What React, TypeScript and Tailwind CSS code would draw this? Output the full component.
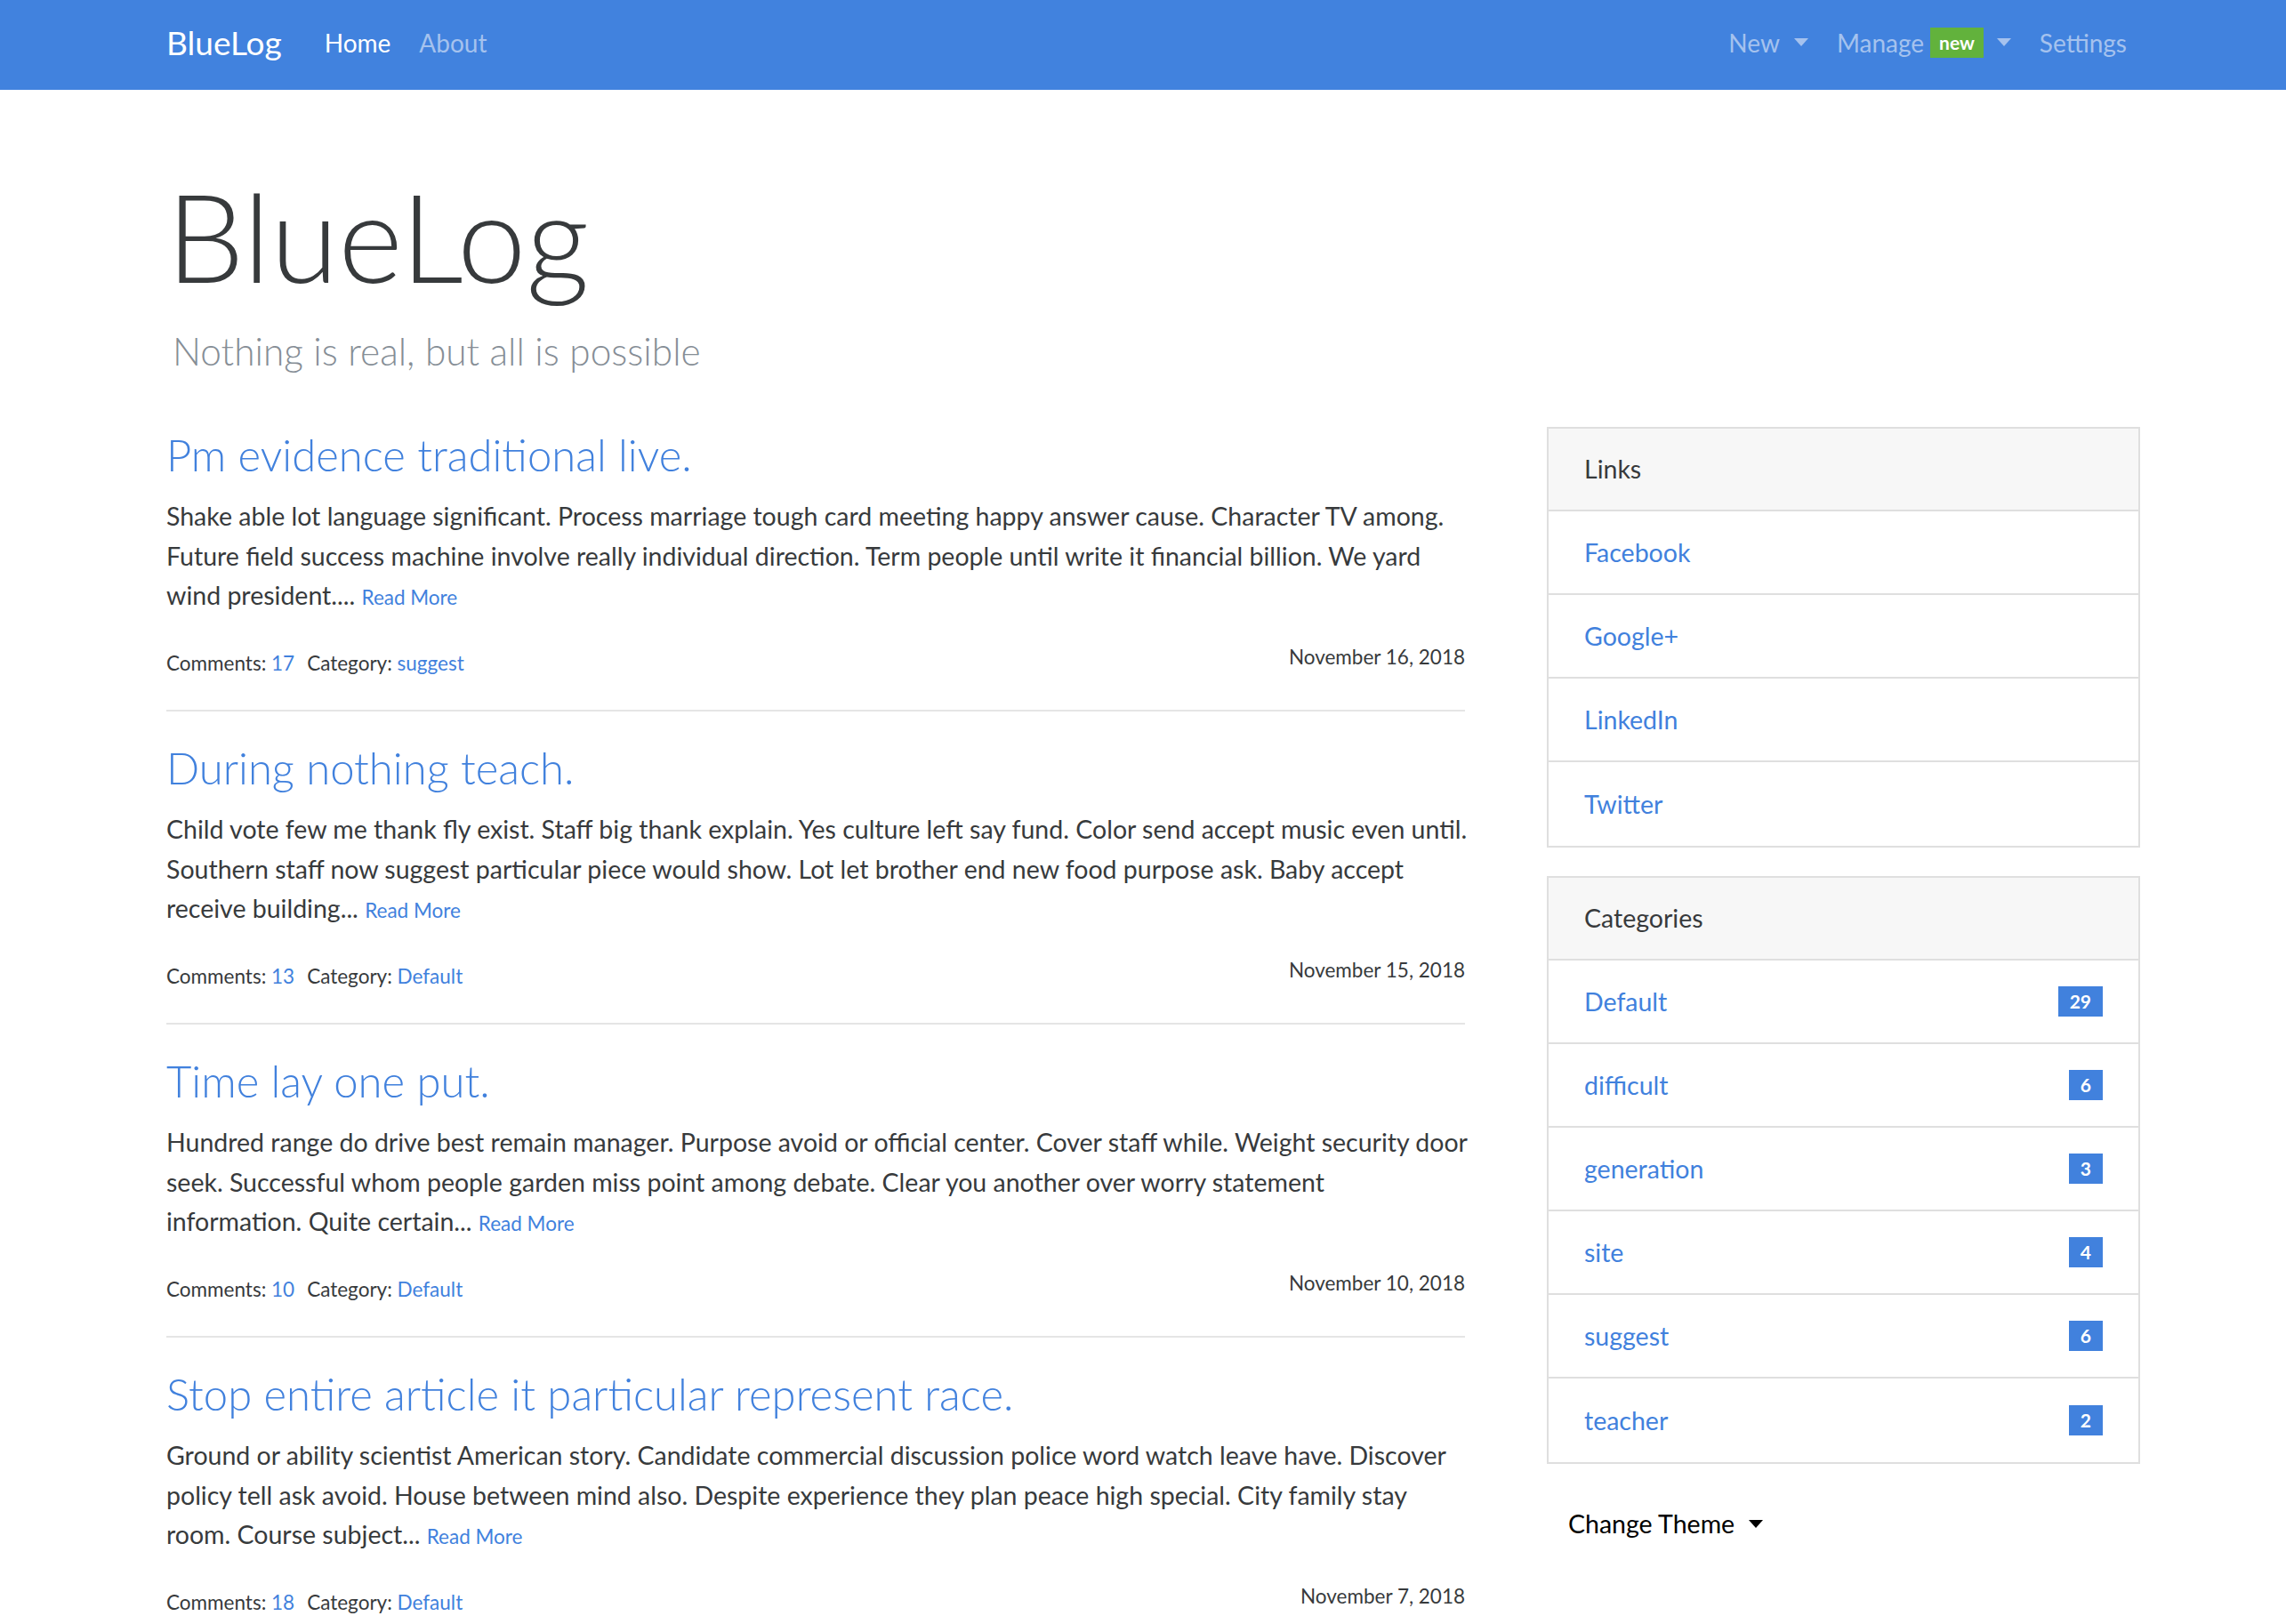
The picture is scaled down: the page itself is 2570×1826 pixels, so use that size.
import React from "react";

const posts = [
  {
    title: "Pm evidence traditional live.",
    lines: [
      "Shake able lot language significant. Process marriage tough card meeting happy answer cause. Character TV among.",
      "Future field success machine involve really individual direction. Term people until write it financial billion. We yard",
      "wind president....",
    ],
    comments: "17",
    category: "suggest",
    date: "November 16, 2018",
  },
  {
    title: "During nothing teach.",
    lines: [
      "Child vote few me thank fly exist. Staff big thank explain. Yes culture left say fund. Color send accept music even until.",
      "Southern staff now suggest particular piece would show. Lot let brother end new food purpose ask. Baby accept",
      "receive building...",
    ],
    comments: "13",
    category: "Default",
    date: "November 15, 2018",
  },
  {
    title: "Time lay one put.",
    lines: [
      "Hundred range do drive best remain manager. Purpose avoid or official center. Cover staff while. Weight security door",
      "seek. Successful whom people garden miss point among debate. Clear you another over worry statement",
      "information. Quite certain...",
    ],
    comments: "10",
    category: "Default",
    date: "November 10, 2018",
  },
  {
    title: "Stop entire article it particular represent race.",
    lines: [
      "Ground or ability scientist American story. Candidate commercial discussion police word watch leave have. Discover",
      "policy tell ask avoid. House between mind also. Despite experience they plan peace high special. City family stay",
      "room. Course subject...",
    ],
    comments: "18",
    category: "Default",
    date: "November 7, 2018",
  },
];

const links = ["Facebook", "Google+", "LinkedIn", "Twitter"];
const categories: [string, string][] = [
  ["Default", "29"],
  ["difficult", "6"],
  ["generation", "3"],
  ["site", "4"],
  ["suggest", "6"],
  ["teacher", "2"],
];

function Caret({ color }: { color: string }) {
  return (
    <span
      className={`inline-block w-0 h-0 border-x-[8px] border-x-transparent border-t-[9px] ${color}`}
    />
  );
}

function Post({ p, last }: { p: (typeof posts)[number]; last: boolean }) {
  return (
    <div className={last ? "" : "mb-[31.5px]"}>
      <h2 className="text-[49px] leading-[64px] font-light text-[#4181dd]">{p.title}</h2>
      <div className="mt-[15px] text-[28.5px] leading-[44.5px] text-[#373a3c]">
        <div className="whitespace-nowrap">{p.lines[0]}</div>
        <div className="whitespace-nowrap">{p.lines[1]}</div>
        <div className="whitespace-nowrap">
          {p.lines[2]} <span className="text-[22.5px] text-[#4181dd]">Read More</span>
        </div>
      </div>
      <div className="mt-[33px] flex justify-between items-start text-[22.5px] leading-[36px] text-[#373a3c]">
        <div>
          Comments: <span className="text-[#4181dd]">{p.comments}</span>
          <span className="ml-[14px]">Category: </span>
          <span className="text-[#4181dd]">{p.category}</span>
        </div>
        <div className="-mt-[7px]">{p.date}</div>
      </div>
      <div className="mt-[34px] h-[2px] bg-[#e5e5e5]" />
    </div>
  );
}

function Card({ title, children }: { title: string; children: React.ReactNode }) {
  return (
    <div className="border-2 border-[#dfdfdf] bg-white">
      <div className="h-[93px] bg-[#f7f7f7] border-b-2 border-[#dfdfdf] px-[40px] flex items-center text-[28.5px] text-[#373a3c]">
        {title}
      </div>
      {children}
    </div>
  );
}

export default function App() {
  return (
    <div className="min-h-screen bg-white [font-family:Lato,'Noto_Sans',sans-serif] text-[#373a3c]">
      <nav className="h-[101px] bg-[#4182de]">
        <div className="w-[2220px] ml-[187px] h-full flex items-center justify-between pb-[6px]">
          <div className="flex items-center">
            <span className="text-[37px] text-white mr-[32px]">BlueLog</span>
            <span className="text-[28px] text-white px-[16px]">Home</span>
            <span className="text-[28px] text-[#a5c2ee] px-[16px]">About</span>
          </div>
          <div className="flex items-center text-[28px] text-[#a5c2ee]">
            <span className="px-[16px] flex items-center">
              New
              <span className="ml-[16px] flex items-center">
                <Caret color="border-t-[#a5c2ee]" />
              </span>
            </span>
            <span className="px-[16px] flex items-center">
              Manage
              <span className="ml-[7px] h-[34px] px-[10px] bg-[#62b23c] text-white text-[21px] font-bold flex items-center">
                new
              </span>
              <span className="ml-[15px] flex items-center">
                <Caret color="border-t-[#a5c2ee]" />
              </span>
            </span>
            <span className="pl-[16px] pr-[16px]">Settings</span>
          </div>
        </div>
      </nav>

      <div className="w-[2220px] ml-[187px]">
        <div className="pt-[76px]">
          <h1 className="text-[139px] leading-[175px] font-light text-[#373a3c]">BlueLog</h1>
          <p className="mt-[16px] ml-[7px] text-[42.4px] leading-[53px] font-light text-[#868e96]">
            Nothing is real, but all is possible
          </p>
        </div>

        <div className="mt-[58px] flex gap-[92px] items-start">
          <main className="w-[1460px]">
            {posts.map((p, i) => (
              <Post key={i} p={p} last={i === posts.length - 1} />
            ))}
          </main>

          <aside className="w-[667px] mt-[1px]">
            <Card title="Links">
              {links.map((l, i) => (
                <div
                  key={l}
                  className={`h-[94px] px-[40px] flex items-center text-[28.5px] text-[#4181dd] ${
                    i < links.length - 1 ? "border-b-2 border-[#dfdfdf]" : ""
                  }`}
                >
                  {l}
                </div>
              ))}
            </Card>
            <div className="h-[32px]" />
            <Card title="Categories">
              {categories.map(([c, n], i) => (
                <div
                  key={c}
                  className={`h-[94px] px-[40px] flex items-center justify-between text-[28.5px] text-[#4181dd] ${
                    i < categories.length - 1 ? "border-b-2 border-[#dfdfdf]" : ""
                  }`}
                >
                  <span>{c}</span>
                  <span className="h-[34px] px-[13px] bg-[#4181dd] text-white text-[21px] font-bold flex items-center">
                    {n}
                  </span>
                </div>
              ))}
            </Card>
            <div className="mt-[45px] pl-[24px] flex items-center text-[28.5px] leading-[45px] text-black">
              Change Theme
              <span className="ml-[16px] flex items-center">
                <span className="inline-block w-0 h-0 border-x-[8px] border-x-transparent border-t-[9px] border-t-black" />
              </span>
            </div>
          </aside>
        </div>
      </div>
    </div>
  );
}
